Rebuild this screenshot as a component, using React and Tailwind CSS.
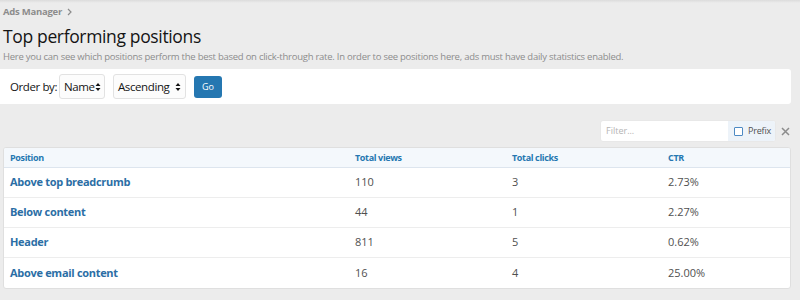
import React from "react";

const rows = [
  { name: "Above top breadcrumb", views: "110", clicks: "3", ctr: "2.73%" },
  { name: "Below content", views: "44", clicks: "1", ctr: "2.27%" },
  { name: "Header", views: "811", clicks: "5", ctr: "0.62%" },
  { name: "Above email content", views: "16", clicks: "4", ctr: "25.00%" },
];

function Updown() {
  return (
    <svg width="6" height="10" viewBox="0 0 6 10" className="shrink-0 text-[#141414]">
      <path d="M0.5 4 L3 1 L5.5 4 Z M0.5 6 L3 9 L5.5 6 Z" fill="currentColor" />
    </svg>
  );
}

export default function App() {
  return (
    <div className="w-[800px] h-[300px] overflow-hidden bg-[#ececec] font-['Open_Sans',sans-serif] text-[#141414] relative">
      <div className="absolute top-0 left-0 right-0 h-[3px] bg-gradient-to-b from-[#dcdcdc] to-transparent" />

      {/* Header */}
      <div className="pl-[3px] pt-[4px]">
        <div className="flex items-center gap-[5px] text-[9.5px] tracking-[-0.25px] font-bold text-[#8c8c8c] h-[16px]">
          Ads Manager
          <svg width="5" height="8" viewBox="0 0 5 8">
            <path d="M1 1 L4 4 L1 7" fill="none" stroke="#8c8c8c" strokeWidth="1.2" />
          </svg>
        </div>
        <h1 className="text-[17.5px] tracking-[-0.35px] leading-[26px] mt-[3px]">Top performing positions</h1>
        <p className="text-[9.5px] tracking-[-0.25px] text-[#8c8c8c] leading-[14px] mt-[1px]">
          Here you can see which positions perform the best based on click-through rate. In order to see positions here, ads must have daily statistics enabled.
        </p>
      </div>

      {/* Order block */}
      <div className="mt-[5px] w-[791px] h-[35px] bg-white rounded-r-[3px] flex items-center pl-[10px] text-[11.5px] tracking-[-0.4px]">
        <span className="w-[49px]">Order by:</span>
        <div className="h-[25px] w-[46px] border border-[#e2e2e2] rounded-[3px] bg-[#fcfcfc] flex items-center justify-between pl-[4px] pr-[4px]">
          <span>Name</span>
          <Updown />
        </div>
        <div className="ml-[8px] h-[25px] w-[73px] border border-[#e2e2e2] rounded-[3px] bg-[#fcfcfc] flex items-center justify-between pl-[4px] pr-[4px]">
          <span>Ascending</span>
          <Updown />
        </div>
        <button className="ml-[8px] h-[22px] w-[28px] rounded-[3px] bg-[#2577b1] text-white text-[9px] tracking-normal flex items-center justify-center">
          Go
        </button>
      </div>

      {/* Filter */}
      <div className="flex justify-end mt-[16px] pr-[6px]">
        <div className="flex items-center h-[22px] w-[176px] bg-white border border-[#e8e8e8] rounded-[3px] overflow-hidden">
          <span className="flex-1 pl-[5px] text-[9px] text-[#b4b4b4]">Filter...</span>
          <div className="h-full flex items-center gap-[5px] pl-[6px] pr-[4px] bg-[#edf3f9] text-[9px] tracking-[-0.2px] text-[#505050]">
            <span className="w-[9px] h-[9px] border border-[#4d8ac4] rounded-[1px] bg-white" />
            Prefix
          </div>
        </div>
        <div className="w-[18px] h-[22px] flex items-center justify-center text-[#8c8c8c]">
          <svg width="9" height="9" viewBox="0 0 9 9">
            <path d="M1 1 L8 8 M8 1 L1 8" stroke="currentColor" strokeWidth="1.5" />
          </svg>
        </div>
      </div>

      {/* Table */}
      <div className="ml-[3px] mt-[5px] w-[788px] bg-white border border-[#dfdfdf] rounded-[3px] overflow-hidden">
        <div className="grid grid-cols-[345px_157px_156px_1fr] h-[20px] items-center bg-[#f4f8fc] border-b border-[#dde5ee] text-[9px] tracking-[-0.35px] font-bold text-[#2577b1] pl-[6px]">
          <span>Position</span>
          <span>Total views</span>
          <span>Total clicks</span>
          <span>CTR</span>
        </div>
        {rows.map((r, i) => (
          <div
            key={r.name}
            className={`grid grid-cols-[345px_157px_156px_1fr] h-[30px] items-center pl-[6px] text-[11px] ${i < rows.length - 1 ? "border-b border-[#ededed]" : ""}`}
          >
            <span className="font-bold text-[#2b6ea5] tracking-[-0.3px]">{r.name}</span>
            <span className="text-[#505050]">{r.views}</span>
            <span className="text-[#505050]">{r.clicks}</span>
            <span className="text-[#505050]">{r.ctr}</span>
          </div>
        ))}
      </div>
    </div>
  );
}
